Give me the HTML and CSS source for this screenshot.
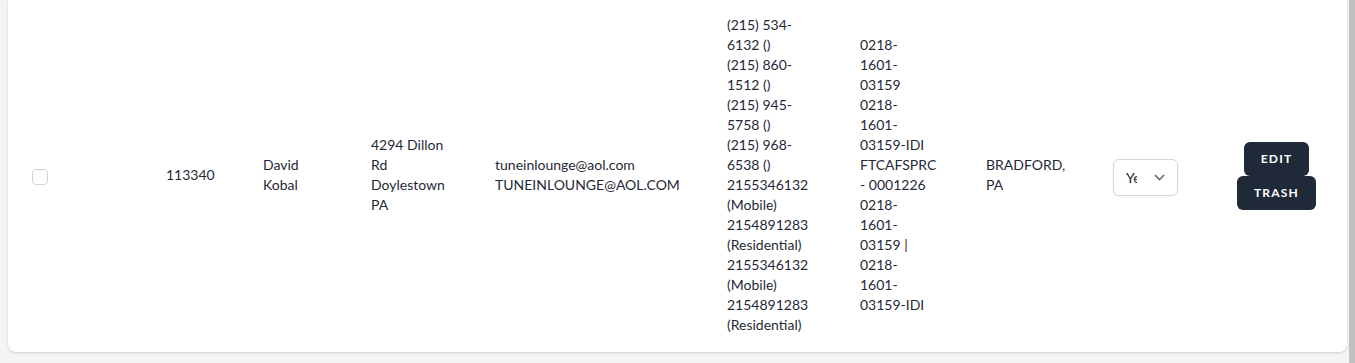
FILE: index.html
```html
<!DOCTYPE html>
<html>
    <head>
        <title>Leads</title>
        <meta charset="UTF-8">
        <link rel="stylesheet" href="styles.css">
    </head>
    <body>
        <div class="page">
            <div class="main">
                <div class="card">
                    <table class="leads">
                        <tbody>
                            <tr>
                                <td class="col-check"><input type="checkbox" class="check"></td>
                                <td class="col-id">113340</td>
                                <td class="col-name">David<br>Kobal</td>
                                <td class="col-addr">4294 Dillon<br>Rd<br>Doylestown<br>PA</td>
                                <td class="col-email">tuneinlounge@aol.com<br>TUNEINLOUNGE@AOL.COM</td>
                                <td class="col-phone">(215) 534-<br>6132 ()<br>(215) 860-<br>1512 ()<br>(215) 945-<br>5758 ()<br>(215) 968-<br>6538 ()<br>2155346132<br>(Mobile)<br>2154891283<br>(Residential)<br>2155346132<br>(Mobile)<br>2154891283<br>(Residential)</td>
                                <td class="col-ref">0218-<br>1601-<br>03159<br>0218-<br>1601-<br>03159-IDI<br>FTCAFSPRC<br>- 0001226<br>0218-<br>1601-<br>03159 |<br>0218-<br>1601-<br>03159-IDI</td>
                                <td class="col-city">BRADFORD,<br>PA</td>
                                <td class="col-status">
                                    <div class="select-wrap">
                                        <select class="select">
                                            <option>Yes</option>
                                            <option>No</option>
                                        </select>
                                        <svg class="chevron" viewBox="0 0 20 20" width="21" height="21">
                                            <path d="M6 8l4 4 4-4" fill="none" stroke="#6b7280" stroke-width="1.5" stroke-linecap="round" stroke-linejoin="round"/>
                                        </svg>
                                    </div>
                                </td>
                                <td class="col-actions">
                                    <div class="actions">
                                        <button class="btn">Edit</button>
                                        <button class="btn">Trash</button>
                                    </div>
                                </td>
                            </tr>
                        </tbody>
                    </table>
                </div>
            </div>
            <div class="scrollbar"></div>
        </div>
    </body>
</html>
```
FILE: styles.css
```css
* {
    margin: 0;
    padding: 0;
    box-sizing: border-box;
}

body {
    background-color: #f3f4f6;
    font-family: Lato, "Noto Sans", sans-serif;
    font-size: 14px;
    line-height: 20px;
    color: #1f2937;
}

.page {
    display: flex;
    justify-content: space-between;
    height: 363px;
    overflow: hidden;
}

.main {
    padding-left: 8px;
}

.card {
    width: 1339px;
    background-color: #fff;
    border-radius: 0 0 8px 8px;
    box-shadow: 0 1px 3px rgba(0, 0, 0, 0.1), 0 1px 2px rgba(0, 0, 0, 0.06);
}

.scrollbar {
    width: 6px;
    background-color: #c1c1c1;
}

.leads {
    width: 100%;
    table-layout: fixed;
    border-collapse: collapse;
}

.leads td {
    padding: 15px 24px 17px;
    vertical-align: middle;
    white-space: nowrap;
}

.leads .col-check { width: 134px; }
.leads .col-id { width: 97px; }
.leads .col-name { width: 108px; }
.leads .col-addr { width: 124px; }
.leads .col-email { width: 232px; }
.leads .col-phone { width: 133px; }
.leads .col-ref { width: 126px; }
.leads .col-city { width: 127px; }
.leads .col-status { width: 117px; }
.leads .col-actions { padding-left: 0; padding-right: 0; }

.check {
    appearance: none;
    display: block;
    width: 16px;
    height: 16px;
    margin-top: 4px;
    border: 1px solid #d1d5db;
    border-radius: 4px;
    background-color: #fff;
}

.select-wrap {
    position: relative;
    width: 65px;
    margin-top: 4px;
}

.select {
    appearance: none;
    display: block;
    width: 65px;
    height: 37px;
    padding: 0 40px 0 12px;
    border: 1px solid #d1d5db;
    border-radius: 6px;
    background-color: #fff;
    box-shadow: 0 1px 2px rgba(0, 0, 0, 0.05);
    font-family: inherit;
    font-size: 14px;
    color: #1f2937;
}

.chevron {
    position: absolute;
    right: 8px;
    top: 8px;
    pointer-events: none;
}

.actions {
    display: flex;
    flex-direction: column;
    align-items: center;
    margin-top: 2px;
}

.btn {
    display: inline-flex;
    align-items: center;
    padding: 8px 16px;
    border: 1px solid transparent;
    border-radius: 6px;
    background-color: #1f2937;
    color: #fff;
    font-family: inherit;
    font-size: 12px;
    line-height: 16px;
    font-weight: 700;
    text-transform: uppercase;
    letter-spacing: 0.1em;
}
```
